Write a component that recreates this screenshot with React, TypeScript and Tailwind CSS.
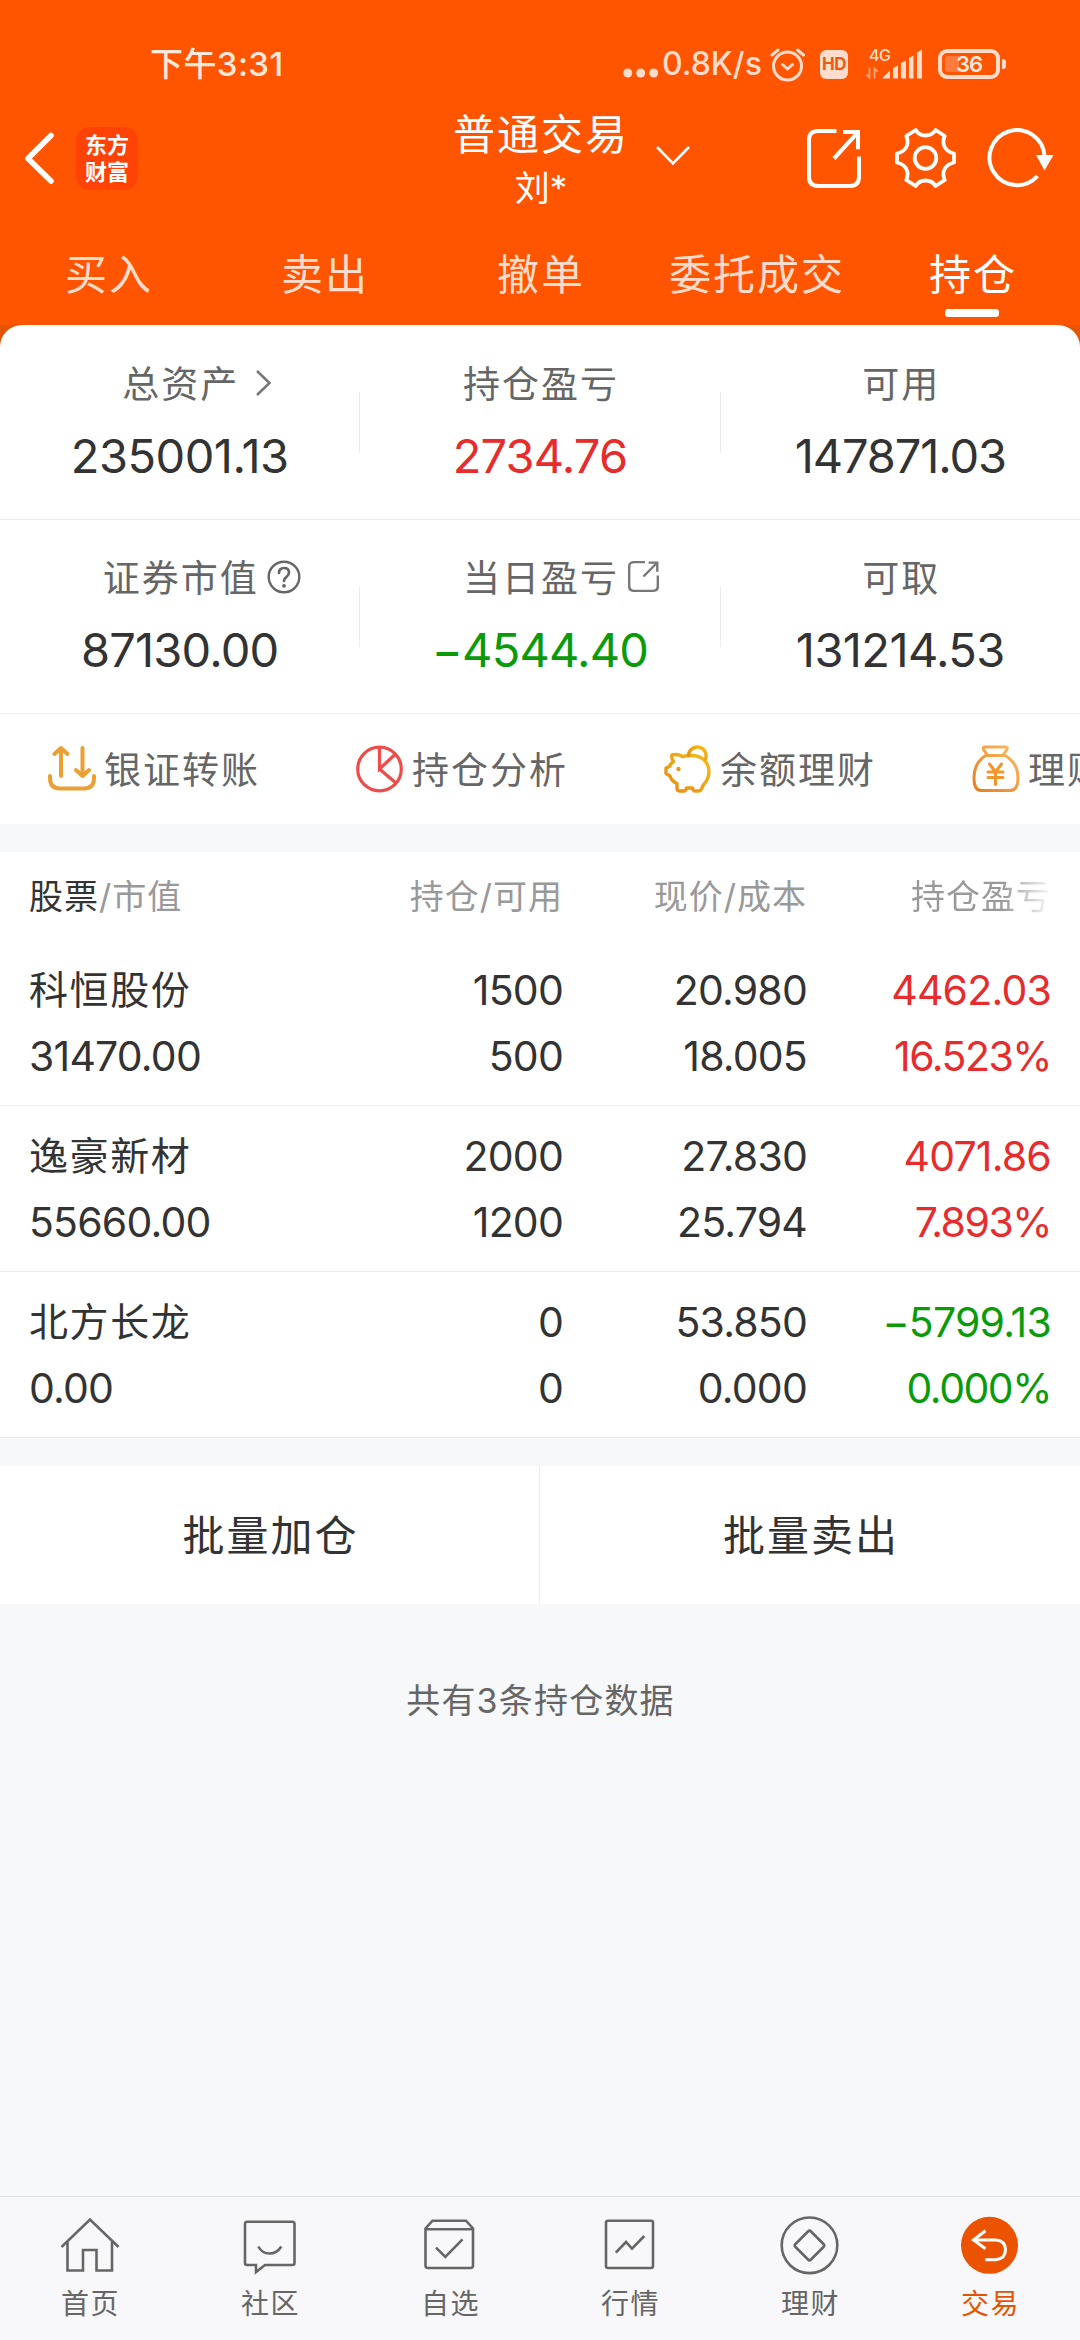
import React from "react";

const FONT = "font-[Inter,'Noto_Sans_CJK_SC',sans-serif]";

function StatusBar() {
  return (
    <div className="flex h-[100px] items-center pt-[28px] pl-[150px] text-[#ffe9dc]">
      <div className="w-[473px] shrink-0 text-[33px] leading-[40px] font-medium tracking-[0.4px] whitespace-nowrap">下午3:31</div>
      <svg className="mt-[17px] h-[10px] w-[36px] shrink-0" viewBox="0 0 36 10" fill="#ffdccb">
        <circle cx="4.7" cy="5" r="4.5" />
        <circle cx="17.7" cy="5" r="4.5" />
        <circle cx="30.7" cy="5" r="4.5" />
      </svg>
      <div className="ml-[3px] w-[107px] shrink-0 text-[32px] leading-[40px] font-medium whitespace-nowrap text-[#ffdccb]">0.8K/s</div>
      <svg className="h-[36px] w-[36px] shrink-0" viewBox="0 0 36 36" fill="none" stroke="#ffdccb" strokeWidth="3" strokeLinecap="round">
        <circle cx="18.500" cy="20" r="14" />
        <path d="M13.500 18.500l5 4.500 5-4.500M3 9l6-5M28.500 4l6 5" />
      </svg>
      <div className="ml-[15px] flex h-[29px] w-[28px] shrink-0 items-center justify-center rounded-[6px] bg-[#ffdccb] text-[17px] leading-none font-bold tracking-[-0.5px] text-[#ee5a14]">HD</div>
      <svg className="ml-[17px] h-[34px] w-[58px] shrink-0" viewBox="0 0 58 34">
        <g fill="#ffdccb">
          <path d="M17 31.500h8v-8zM28 31.500h5v-13l-5 2.500zM36 31.500h5v-18l-5 2.500zM44 31.500h4.500v-23l-4.500 2.500zM52 31.500h5v-29l-5 3z" />
          <text x="4" y="13.500" fontSize="16" fontFamily="Inter" fontWeight="500" letterSpacing="-0.5">4G</text>
        </g>
        <path d="M4.500 20.500v10l-3-3M9.500 31.500v-10l3 3" fill="none" stroke="#ffa57a" strokeWidth="1.800" />
      </svg>
      <div className="ml-[15px] flex h-[30px] w-[62px] shrink-0 items-center rounded-[9px] border-4 border-[#ffdccb] pl-[3px] text-[22px] leading-none font-semibold">
        <div className="h-[16px] w-[14px] rounded-l-[3px] bg-[#ff7a3c]" />
        <span className="-ml-[3px] tracking-[-1px]">36</span>
      </div>
      <div className="ml-[2px] h-[10px] w-[4px] shrink-0 rounded-r-[3px] bg-[#ffdccb]" />
    </div>
  );
}

function ShareIcon({ className, stroke }: { className: string; stroke: number }) {
  return (
    <svg className={className} viewBox="0 0 54 58" preserveAspectRatio="none" fill="none" stroke="currentColor" strokeWidth={stroke}>
      <path d="M29.500 2H11Q2 2 2 11V47Q2 56 11 56H43Q52 56 52 47V27" />
      <path d="M36 3H51V20" />
      <path d="M51 3L27 29" />
    </svg>
  );
}

function TitleBar() {
  return (
    <div className="grid h-[116px] grid-cols-[1fr_auto_1fr] items-center text-white">
      <div className="flex items-center pl-[24px]">
        <svg className="h-[54px] w-[32px]" viewBox="0 0 32 54" fill="none" stroke="currentColor" strokeWidth="5.500" strokeLinecap="round" strokeLinejoin="round">
          <path d="M27 4.500L4 27.500L27 50" />
        </svg>
        <div className="ml-[20px] flex h-[63px] w-[62px] flex-col items-center justify-center rounded-[14px] bg-[#ff4205] pb-[2px] font-['Noto_Sans_CJK_SC',sans-serif] text-[22px] leading-[27px] font-bold">
          <div>东方</div>
          <div>财富</div>
        </div>
      </div>
      <div className="relative mt-[6px] text-center">
        <div className="pl-[2px] text-[42px] leading-[54px] tracking-[2px]">普通交易</div>
        <div className="pl-[2px] text-[35px] leading-[52px]">刘*</div>
        <svg className="absolute top-[37px] left-[204px] h-[22px] w-[36px]" viewBox="0 0 36 22" fill="none" stroke="currentColor" strokeWidth="2.600">
          <path d="M2 2L18 18.500L34 2" />
        </svg>
      </div>
      <div className="flex items-center justify-end pr-[25px]">
        <ShareIcon className="h-[59px] w-[54px]" stroke={4} />
        <svg className="ml-[34px] h-[60px] w-[61px]" viewBox="0 0 61 60" fill="none" stroke="currentColor" strokeWidth="3.800" strokeLinejoin="round">
          <path d="M11.300 8L20.700 2Q24 7.500 30.500 7.500Q37 7.500 40.600 2L49.700 8Q47.500 13 49 17.500Q51 23.500 59 25.500V34.500Q51 36.500 49 42.500Q47.500 47 49.700 52L40.600 58Q37 52.500 30.500 52.500Q24 52.500 20.700 58L11.300 52Q13.500 47 12 42.500Q10 36.500 2 34.500V25.500Q10 23.500 12 17.500Q13.500 13 11.300 8Z" />
          <circle cx="30.500" cy="30" r="10.800" />
        </svg>
        <svg className="ml-[31px] h-[60px] w-[68px]" viewBox="0 0 68 60">
          <path d="M50.500 48A27.500 27.500 0 1 1 57.500 28" fill="none" stroke="currentColor" strokeWidth="4" />
          <path d="M49 27H66.500L57.500 42.500Z" fill="currentColor" />
        </svg>
      </div>
    </div>
  );
}

const tabs = ["买入", "卖出", "撤单", "委托成交", "持仓"];

function Tabs() {
  return (
    <div className="grid h-[109px] grid-cols-5 pt-[30px]">
      {tabs.map((t, i) => (
        <div key={t} className="flex flex-col items-center">
          <div className={`pl-[2px] text-[42px] leading-[58px] tracking-[2px] whitespace-nowrap ${i === 4 ? "text-white" : "text-[#ffdccb]"}`}>{t}</div>
          {i === 4 && <div className="mt-[5px] h-[8px] w-[54px] rounded-[3px] bg-white" />}
        </div>
      ))}
    </div>
  );
}

const ChevronRight = (
  <svg className="absolute top-[8px] left-full ml-[16px] h-[28px] w-[18px]" viewBox="0 0 18 28" fill="none" stroke="#777" strokeWidth="2.500">
    <path d="M2 2L14.500 14L2 26" />
  </svg>
);

const HelpIcon = (
  <svg className="absolute top-[5px] left-full ml-[8px] h-[34px] w-[34px]" viewBox="0 0 34 34" fill="none" stroke="#666" strokeWidth="2.400" strokeLinecap="round">
    <circle cx="17" cy="17" r="15.300" />
    <path d="M12 13Q12 8 17 8Q22 8 22 12.500Q22 15 19.500 16.800Q17 18.500 17 21" strokeWidth="2.700" />
    <circle cx="17" cy="25.800" r="1.900" fill="#666" stroke="none" />
  </svg>
);

const OpenIcon = (
  <span className="absolute top-[6px] left-full ml-[9px] text-[#777]">
    <ShareIcon className="h-[31px] w-[31px]" stroke={4.2} />
  </span>
);

type Stat = { label: string; value: string; color: string; icon?: React.ReactNode };

const stats: Stat[][] = [
  [
    { label: "总资产", value: "235001.13", color: "text-[#333] tracking-[-0.5px]", icon: ChevronRight },
    { label: "持仓盈亏", value: "2734.76", color: "text-[#e62c2c] tracking-[-0.8px]" },
    { label: "可用", value: "147871.03", color: "text-[#333] tracking-[-1.100px]" },
  ],
  [
    { label: "证券市值", value: "87130.00", color: "text-[#333] tracking-[-0.8px]", icon: HelpIcon },
    { label: "当日盈亏", value: "−4544.40", color: "text-[#0a9b0a] tracking-[-0.8px]", icon: OpenIcon },
    { label: "可取", value: "131214.53", color: "text-[#333] tracking-[-0.6px]" },
  ],
];

function Summary() {
  return (
    <div className="bg-[#e25406]">
      <div className="rounded-t-[22px] bg-white pt-px">
        {stats.map((row, r) => (
          <div key={r} className="flex h-[194px] items-center border-b border-[#ebebeb]">
            {row.map((s, i) => (
              <React.Fragment key={s.label}>
                {i > 0 && <div className="h-[61px] w-px bg-[#ebebeb]" />}
                <div className="flex h-full flex-1 flex-col items-center pt-[35px]">
                  <div className="relative pl-[2px] text-[37px] leading-[48px] tracking-[2px] text-[#666]">
                    {s.label}
                    {s.icon}
                  </div>
                  <div className={`mt-[19px] text-[47px] leading-[56px] ${s.color}`}>{s.value}</div>
                </div>
              </React.Fragment>
            ))}
          </div>
        ))}
      </div>
    </div>
  );
}

const TransferIcon = (
  <svg className="h-[48px] w-[48px] shrink-0" viewBox="0 0 48 48" fill="none" stroke="#eba036" strokeWidth="4" strokeLinecap="round" strokeLinejoin="round">
    <path d="M13 31V3M6.500 9L13 3L19.500 9M34.500 3V31M28 25L34.500 31L41 25M2 31V33Q2 43.500 12 43.500H36Q46 43.500 46 33V31" />
  </svg>
);

const PieIcon = (
  <svg className="h-[48px] w-[48px] shrink-0" viewBox="0 0 48 48" fill="none" stroke="#ee4b4b" strokeWidth="3.200">
    <circle cx="23.500" cy="24" r="21.800" />
    <path d="M23.500 2V24L39.500 9M23.500 24L40.500 38.500" />
  </svg>
);

const PigIcon = (
  <svg className="h-[48px] w-[48px] shrink-0" viewBox="0 0 48 48" fill="none" strokeWidth="3.400" strokeLinejoin="round" strokeLinecap="round">
    <defs>
      <linearGradient id="pig" x1="0" y1="1" x2="1" y2="0">
        <stop offset="0" stopColor="#e68a18" />
        <stop offset="1" stopColor="#f5bd14" />
      </linearGradient>
    </defs>
    <g stroke="url(#pig)">
      <path d="M8 10Q14 8.500 18.500 11.500Q32 8.500 39 14Q45 19 45 26.500Q45 34 39 40.500L37.500 44Q36.500 46 34 46H31Q29 46 28.500 43H22.500Q22 46 20 46H15.500Q13 46 13 43.500V38.500Q7.500 36 6 31L2 28.500V23L5.500 21.500Q6.500 18.500 9.500 16.500Q7 13 8 10Z" />
      <path d="M24.500 10.500A8.800 8.800 0 1 1 41.500 14" />
    </g>
    <circle cx="14.500" cy="24" r="2.200" fill="#e99a18" />
  </svg>
);

const BagIcon = (
  <svg className="h-[48px] w-[48px] shrink-0" viewBox="0 0 48 48" fill="none" strokeWidth="3" strokeLinejoin="round" strokeLinecap="round">
    <defs>
      <linearGradient id="bag" x1="1" y1="0" x2="0" y2="1">
        <stop offset="0" stopColor="#f9bd66" />
        <stop offset="1" stopColor="#e67f1e" />
      </linearGradient>
    </defs>
    <path stroke="url(#bag)" d="M13 2H33.500Q36 2 35 4.500L31.500 9.500Q46 17 46 33Q46 45.500 38 45.500H9Q2 45.500 2 33Q2 17 15 9.500L11.500 4.500Q10.500 2 13 2ZM15 10.500H31.500" />
    <path stroke="#f0962a" d="M17.500 19L23.500 27L29.500 19M23.500 27V39.500M16 27H31M16 32.500H31" />
  </svg>
);

const shortcuts = [
  { label: "银证转账", icon: TransferIcon },
  { label: "持仓分析", icon: PieIcon },
  { label: "余额理财", icon: PigIcon },
  { label: "理财", icon: BagIcon },
];

function Shortcuts() {
  return (
    <div className="flex h-[110px] overflow-hidden bg-white pl-[48px]">
      {shortcuts.map((s) => (
        <div key={s.label} className="flex w-[308px] shrink-0 items-center">
          {s.icon}
          <span className="mt-[4px] ml-[8px] text-[37px] leading-[48px] tracking-[2px] whitespace-nowrap text-[#666]">{s.label}</span>
        </div>
      ))}
    </div>
  );
}

const COLS = "grid grid-cols-[321px_213px_244px_244px] px-[29px]";

const holdings = [
  { name: "科恒股份", value: "31470.00", qty: "1500", avail: "500", price: "20.980", cost: "18.005", pl: "4462.03", pct: "16.523%", color: "text-[#e62c2c]" },
  { name: "逸豪新材", value: "55660.00", qty: "2000", avail: "1200", price: "27.830", cost: "25.794", pl: "4071.86", pct: "7.893%", color: "text-[#e62c2c]" },
  { name: "北方长龙", value: "0.00", qty: "0", avail: "0", price: "53.850", cost: "0.000", pl: "−5799.13", pct: "0.000%", color: "text-[#0a9b0a]" },
];

function Holdings() {
  return (
    <div className="mt-[28px] bg-white">
      <div className={`${COLS} h-[88px] items-center pt-px text-right text-[34px] leading-[44px] tracking-[1px] whitespace-nowrap text-[#999]`}>
        <div className="text-left">
          <span className="text-[#333]">股票</span>/市值
        </div>
        <div>持仓/可用</div>
        <div>现价/成本</div>
        <div className="bg-linear-to-r from-[#999] from-80% to-[#99999910] bg-clip-text text-transparent">持仓盈亏</div>
      </div>
      {holdings.map((h) => (
        <div key={h.name} className={`${COLS} h-[166px] border-b border-[#ebebeb] pt-[17px] text-right text-[41px] leading-[66px] tracking-[-0.8px] text-[#333]`}>
          <div className="text-left">
            <div className="text-[39px] tracking-[1.600px]">{h.name}</div>
            <div>{h.value}</div>
          </div>
          <div>
            <div>{h.qty}</div>
            <div>{h.avail}</div>
          </div>
          <div>
            <div>{h.price}</div>
            <div>{h.cost}</div>
          </div>
          <div className={h.color}>
            <div>{h.pl}</div>
            <div className="tracking-[-1.500px]">{h.pct}</div>
          </div>
        </div>
      ))}
    </div>
  );
}

const navItems = [
  { label: "首页", icon: <path d="M1.500 32L30 4.500L58.500 32M7.500 27V55.500H23V35H36.500V55.500H52V27" /> },
  {
    label: "社区",
    icon: <path d="M7 6.700H52.500Q54.500 6.700 54.500 9V48Q54.500 50 52.500 50H25L16 57V50H7Q5 50 5 48V9Q5 6.700 7 6.700ZM18.300 31.500Q22 38.500 29.500 38.500Q37 38.500 41.300 31.500" />,
  },
  {
    label: "自选",
    icon: <path d="M12.500 5.700H46L53 13.500V50.500Q53 53 50.500 53H8Q5.500 53 5.500 50.500V13.500ZM5.500 14.300H53M16 32.700L25.300 42L42.500 24.300" />,
  },
  {
    label: "行情",
    icon: (
      <>
        <rect x="6" y="5.700" width="47" height="47.300" rx="2" />
        <path d="M15.800 37.700L26 27L32 33.700L44.300 21" />
      </>
    ),
  },
  {
    label: "理财",
    icon: (
      <>
        <circle cx="29.500" cy="30.300" r="27.800" />
        <path d="M28 16.500Q29.500 15 31 16.500L43.500 29Q45 30.500 43.500 32L31 44.500Q29.500 46 28 44.500L15.500 32Q14 30.500 15.500 29Z" />
      </>
    ),
  },
  {
    label: "交易",
    icon: (
      <>
        <circle cx="29.500" cy="30.300" r="28.500" fill="#eb5300" stroke="none" />
        <path stroke="#fff" strokeWidth="3" d="M25.500 15.700L13.500 25L25.500 33.700M13.500 25H36Q45.500 26 45.500 34.500Q45.500 43.500 36 44.700H25.300" />
      </>
    ),
  },
];

function BottomNav() {
  return (
    <div className="grid h-[144px] grid-cols-6 border-t border-[#dfe0e2] bg-[#f8f8fa]">
      {navItems.map((n, i) => (
        <div key={n.label} className="flex flex-col items-center pt-[18px]">
          <svg className="h-[60px] w-[60px]" viewBox="0 0 60 60" fill="none" stroke="#666" strokeWidth="2.600">
            {n.icon}
          </svg>
          <span className={`mt-[9px] pl-[1px] text-[28px] leading-[40px] tracking-[1.500px] ${i === 5 ? "text-[#e35505]" : "text-[#666]"}`}>{n.label}</span>
        </div>
      ))}
    </div>
  );
}

export default function App() {
  return (
    <div lang="zh-CN" className={`flex h-[2340px] w-[1080px] flex-col overflow-hidden bg-[#f6f8fa] ${FONT}`}>
      <div className="bg-[#ff5500]">
        <StatusBar />
        <TitleBar />
        <Tabs />
      </div>
      <Summary />
      <Shortcuts />
      <Holdings />
      <div className="mt-[28px] flex h-[138px] items-center bg-white text-center text-[42px] leading-[60px] tracking-[2px] text-[#333]">
        <div className="w-[539px] pt-[2px] pl-[2px]">批量加仓</div>
        <div className="h-full w-px bg-[#ebebeb]" />
        <div className="w-[540px] pt-[2px] pl-[2px]">批量卖出</div>
      </div>
      <div className="mt-[72px] pl-[1px] text-center text-[34px] leading-[50px] tracking-[1.200px] text-[#666]">共有3条持仓数据</div>
      <div className="flex-1" />
      <BottomNav />
    </div>
  );
}
